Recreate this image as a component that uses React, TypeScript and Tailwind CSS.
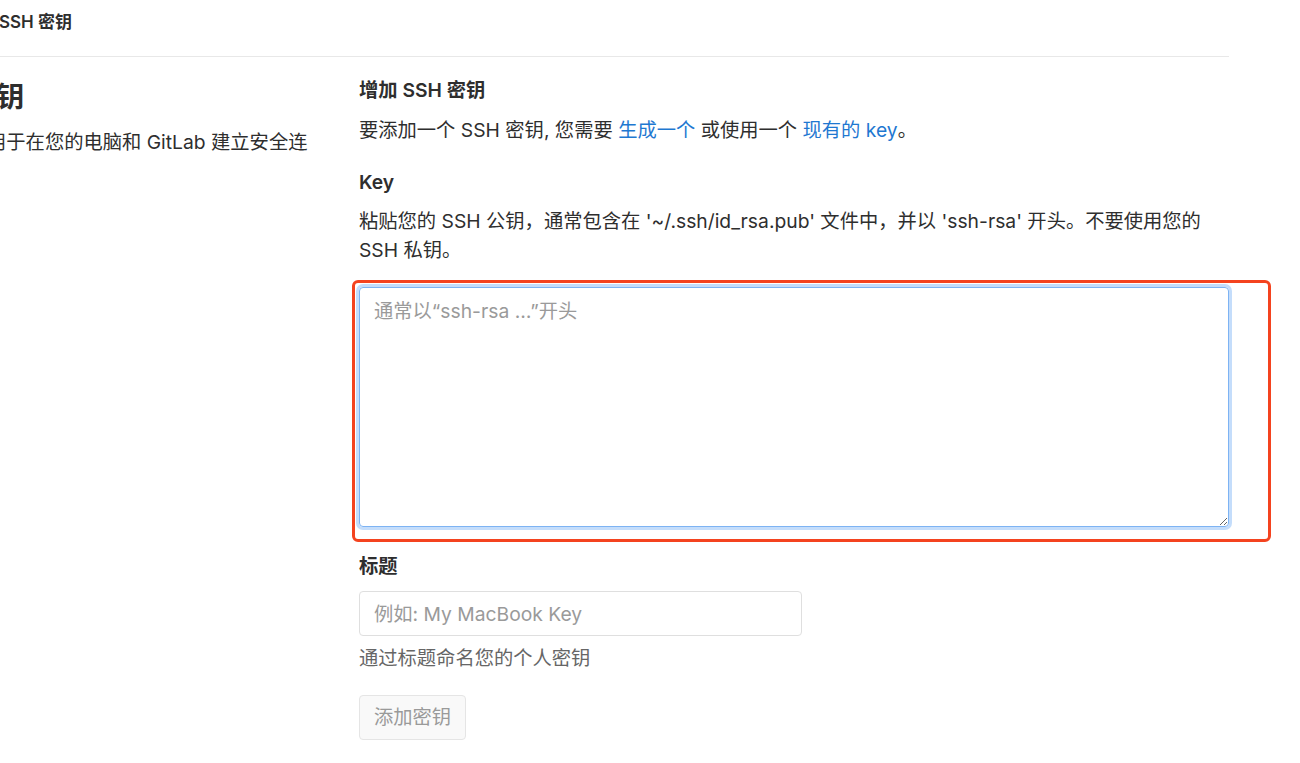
import React from 'react';

const FONT = { fontFamily: '"Inter", "Noto Sans CJK SC", sans-serif' };

export default function App() {
  return (
    <div className="min-h-screen bg-white text-[#2e2e2e] overflow-hidden" style={FONT}>
      <div className="ml-[-96px] w-[1325px]">
        {/* breadcrumb */}
        <div className="h-[57px] border-b border-[#e8e8e8] pt-[10px] flex items-start">
          <span className="inline-block w-[95px] text-[17px] leading-[24px] text-[#707070] whitespace-nowrap overflow-hidden">
            用户设置 ›
          </span>
          <span className="text-[17px] leading-[24px] font-semibold text-[#2e2e2e] whitespace-nowrap">SSH 密钥</span>
        </div>

        <div className="flex">
          {/* left column */}
          <div className="w-[415px] shrink-0 pt-[22px]">
            <h2 className="text-[28px] leading-[36px] font-semibold">SSH 密钥</h2>
            <p className="mt-[14px] text-[19.3px] leading-[26px]">
              SSH 密钥用于在您的电脑和 GitLab 建立安全连接。
            </p>
          </div>

          {/* right column */}
          <div className="ml-[40px] w-[870px] pt-[20px]">
            <h4 className="text-[19.3px] leading-[26px] font-semibold">增加 SSH 密钥</h4>
            <p className="mt-[14px] text-[19.3px] leading-[26px]">
              要添加一个 SSH 密钥, 您需要 <a className="text-[#1f78d1]">生成一个</a> 或使用一个{' '}
              <a className="text-[#1f78d1]">现有的 key</a>。
            </p>

            <label className="block mt-[26px] text-[19.3px] leading-[26px] font-semibold">Key</label>
            <p className="mt-[12px] text-[19.3px] leading-[29px]">
              粘贴您的 SSH 公钥，通常包含在 '~/.ssh/id_rsa.pub' 文件中，并以 'ssh-rsa' 开头。不要使用您的
              <br />
              SSH 私钥。
            </p>

            <div className="relative mt-[22px]">
              <textarea
                className="block w-full h-[240px] rounded-[4px] border border-[#7db3f3] ring-[3px] ring-[#c4ddfb] px-[14px] py-[10px] text-[19.3px] leading-[26px] outline-none resize-y caret-[#2e2e2e] placeholder:text-[#9a9a9a]"
                placeholder="通常以“ssh-rsa …”开头"
              />
              <div className="pointer-events-none absolute left-[-7px] top-[-7px] w-[919px] h-[262px] rounded-[6px] border-[3px] border-[#f4431f]" />
            </div>

            <label className="block mt-[26px] text-[19.3px] leading-[26px] font-semibold">标题</label>
            <input
              className="block mt-[12px] w-[443px] h-[45px] rounded-[4px] border border-[#dfdfdf] px-[14px] text-[19.3px] outline-none placeholder:text-[#9a9a9a]"
              placeholder="例如: My MacBook Key"
            />
            <p className="mt-[9px] text-[19.3px] leading-[26px] text-[#666666]">通过标题命名您的个人密钥</p>

            <button
              disabled
              className="mt-[24px] h-[45px] px-[14px] rounded-[4px] border border-[#e5e5e5] bg-[#f9f9f9] text-[19.3px] text-[#9a9a9a]"
            >
              添加密钥
            </button>
          </div>
        </div>
      </div>
    </div>
  );
}
